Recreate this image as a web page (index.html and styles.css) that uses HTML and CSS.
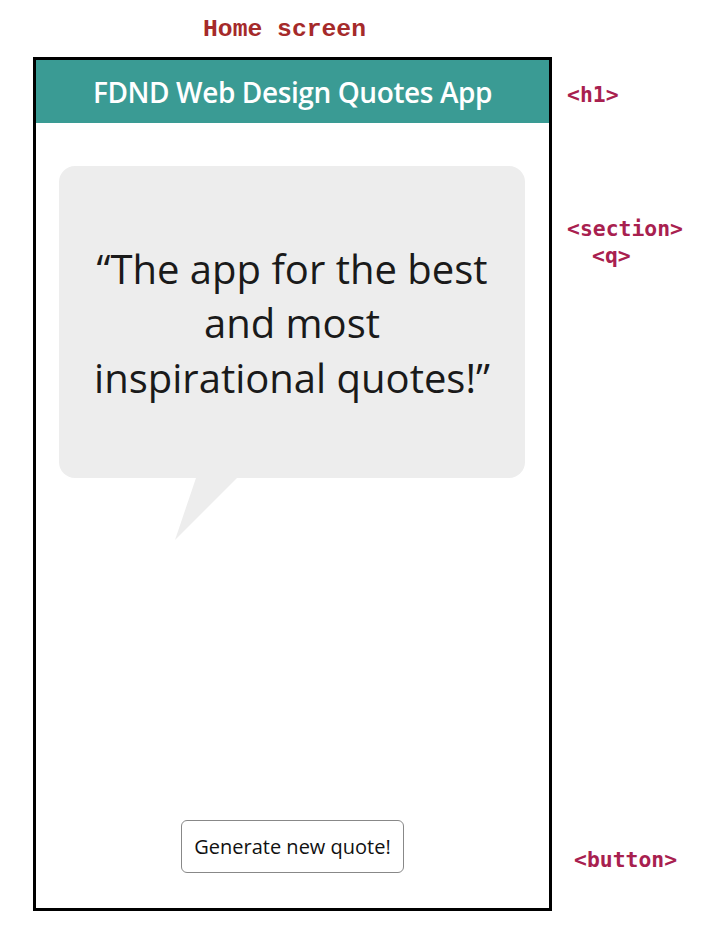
FILE: index.html
```html
<!DOCTYPE html>
<html lang="en">
  <head>
    <meta charset="UTF-8" />
    <meta name="viewport" content="width=device-width, initial-scale=1.0" />
    <title>Home screen</title>
    <link rel="stylesheet" href="styles.css">
  </head>
  <body>
    <main class="board">
      <h2 class="board-title">Home screen</h2>

      <div class="board-row">
        <div class="phone">
          <h1 class="app-title">FDND Web Design Quotes App</h1>

          <section class="quote-area">
            <div class="bubble">
              <q class="quote">The app for the best and most inspirational quotes!</q>
            </div>
            <div class="bubble-tail"></div>
          </section>

          <div class="actions">
            <button class="new-quote">Generate new quote!</button>
          </div>
        </div>

        <ul class="tags">
          <li class="tag tag-h1">&lt;h1&gt;</li>
          <li class="tag tag-section">&lt;section&gt;</li>
          <li class="tag tag-q">&lt;q&gt;</li>
          <li class="tag tag-button">&lt;button&gt;</li>
        </ul>
      </div>
    </main>
  </body>
</html>
```

FILE: styles.css
```css
body {
  margin: 0;
  padding: 0;
  background-color: #ffffff;
  font-family: "Open Sans", Arial, sans-serif;
}
.board {
  padding-left: 33px;
}
.board-title {
  margin: 0;
  padding: 14px 0 0 170px;
  height: 43px;
  font-family: "Liberation Mono", "Courier New", monospace;
  font-size: 24.7px;
  font-weight: bold;
  line-height: 30px;
  color: #a52a2a;
}
.board-row {
  display: flex;
  flex-direction: row;
}
.phone {
  width: 513px;
  height: 848px;
  border: 3px solid #000;
  display: flex;
  flex-direction: column;
}
.app-title {
  margin: 0;
  height: 63px;
  background-color: #3a9b94;
  color: #fff;
  font-size: 28px;
  font-weight: 600;
  letter-spacing: -0.4px;
  line-height: 64px;
  text-align: center;
}
.quote-area {
  padding: 43px 24px 0 23px;
  flex: 1;
}
.bubble {
  height: 312px;
  background-color: #ededed;
  border-radius: 16px;
  display: flex;
  align-items: center;
  justify-content: center;
  text-align: center;
}
.quote {
  display: block;
  padding: 3px 30px 0;
  font-size: 40px;
  line-height: 54.5px;
  color: #1a1a1a;
}
.bubble-tail {
  width: 62px;
  height: 62px;
  margin-left: 116px;
  background-color: #ededed;
  clip-path: polygon(21px 0, 62px 0, 0 62px);
}
.actions {
  display: flex;
  justify-content: center;
  padding-bottom: 35px;
}
.new-quote {
  height: 53px;
  padding: 0 12px;
  background-color: #fff;
  border: 1px solid #888;
  border-radius: 6px;
  font-family: "Open Sans", Arial, sans-serif;
  font-size: 20px;
  color: #111;
}
.tags {
  list-style: none;
  margin: 0;
  padding: 0 0 0 15px;
  display: flex;
  flex-direction: column;
  font-family: "DejaVu Sans Mono", Consolas, monospace;
  font-size: 21.4px;
  font-weight: bold;
  line-height: 26px;
  color: #a8204f;
}
.tag-h1 {
  margin-top: 25px;
}
.tag-section {
  margin-top: 108px;
}
.tag-q {
  margin-left: 25px;
  margin-top: 1px;
}
.tag-button {
  margin-top: auto;
  margin-bottom: 38px;
  margin-left: 7px;
}
```
